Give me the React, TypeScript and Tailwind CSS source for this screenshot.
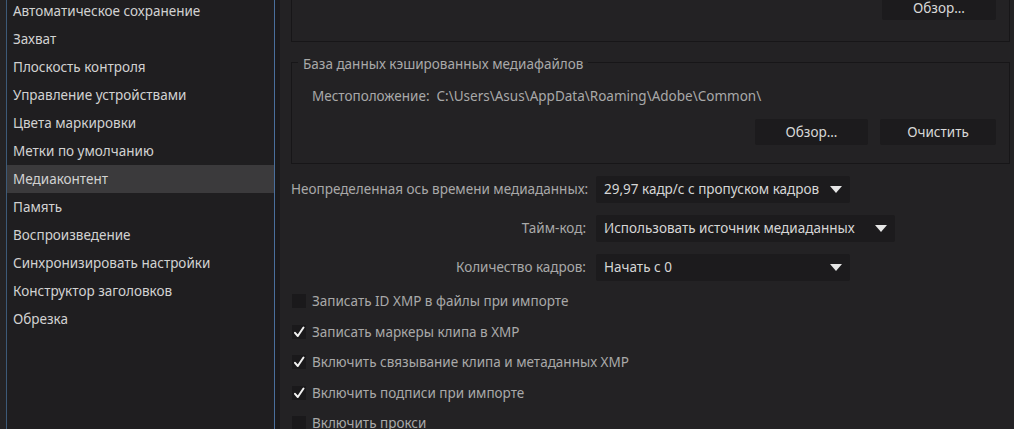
import React from 'react';

const sections = [
  'Автоматическое сохранение',
  'Захват',
  'Плоскость контроля',
  'Управление устройствами',
  'Цвета маркировки',
  'Метки по умолчанию',
  'Медиаконтент',
  'Память',
  'Воспроизведение',
  'Синхронизировать настройки',
  'Конструктор заголовков',
  'Обрезка',
];

const checks = [
  { label: 'Записать ID XMP в файлы при импорте', on: false },
  { label: 'Записать маркеры клипа в XMP', on: true },
  { label: 'Включить связывание клипа и метаданных XMP', on: true },
  { label: 'Включить подписи при импорте', on: true },
  { label: 'Включить прокси', on: false },
];

function Arrow() {
  return (
    <svg width="12" height="7" viewBox="0 0 12 7" className="shrink-0">
      <path d="M0 0 H12 L6 7 Z" fill="#e6e6e6" />
    </svg>
  );
}

function Dropdown({ value, width }: { value: string; width: string }) {
  return (
    <div className={`flex h-[27px] items-center gap-[6px] rounded-[2px] bg-[#1c1b1d] pl-[8px] pr-[8px] text-[#d6d6d6] ${width}`}>
      <span className="flex-1 whitespace-nowrap">{value}</span>
      <Arrow />
    </div>
  );
}

function Button({ children, className = '' }: { children: React.ReactNode; className?: string }) {
  return (
    <div className={`flex items-center justify-center rounded-[2px] bg-[#1c1b1d] text-[#d8d8d8] ${className}`}>
      {children}
    </div>
  );
}

export default function App() {
  return (
    <div
      className="flex h-[429px] w-[1014px] overflow-hidden bg-[#232224] text-[13.5px]"
      style={{ fontFamily: '"Noto Sans", "DejaVu Sans", sans-serif' }}
    >
      {/* список разделов */}
      <div className="flex w-[280px] shrink-0 bg-[#1f1e20]">
        <div className="w-[6px] bg-[#242325]" />
        <div className="w-[1px] bg-[#3d5a78]" />
        <div className="-mt-[3px] flex flex-1 flex-col">
          {sections.map((s) => (
            <div
              key={s}
              className={`flex h-[28px] shrink-0 items-center pl-[6px] text-[#d2d2d2] ${s === 'Медиаконтент' ? 'bg-[#3b3a3c]' : ''}`}
            >
              {s}
            </div>
          ))}
        </div>
        <div className="w-[1px] bg-[#4a6f9c]" />
        <div className="w-[5px] bg-[#1b1a1c]" />
      </div>

      {/* настройки */}
      <div className="flex min-w-0 flex-1 flex-col pl-[11px] pr-[4px]">
        <div className="flex h-[42px] shrink-0 justify-end border-b border-l border-r border-[#171618] pr-[13px]">
          <Button className="-mt-[4px] h-[24px] w-[114px]">Обзор...</Button>
        </div>

        <div className="relative mt-[20px] h-[102px] shrink-0 border border-[#171618]">
          <div className="absolute -top-[8px] left-[6px] bg-[#232224] px-[5px] leading-[18px] text-[#a9a9a9]">
            База данных кэшированных медиафайлов
          </div>
          <div className="pl-[20px] pt-[23px] text-[#a9a9a9]">
            Местоположение:&nbsp; C:\Users\Asus\AppData\Roaming\Adobe\Common\
          </div>
          <div className="mt-[13px] flex justify-end gap-[12px] pr-[13px]">
            <Button className="h-[26px] w-[113px]">Обзор...</Button>
            <Button className="h-[26px] w-[116px]">Очистить</Button>
          </div>
        </div>

        <div className="mt-[12px] grid shrink-0 grid-cols-[295px_auto] items-center gap-x-[10px] gap-y-[12px] text-[#a9a9a9]">
          <div className="whitespace-nowrap text-right">Неопределенная ось времени медиаданных:</div>
          <div>
            <Dropdown value="29,97 кадр/с с пропуском кадров" width="w-[254px]" />
          </div>
          <div className="text-right">Тайм-код:</div>
          <div>
            <Dropdown value="Использовать источник медиаданных" width="w-[299px]" />
          </div>
          <div className="text-right">Количество кадров:</div>
          <div>
            <Dropdown value="Начать с 0" width="w-[254px]" />
          </div>
        </div>

        <div className="mt-[5px] flex shrink-0 flex-col">
          {checks.map((c) => (
            <div key={c.label} className="flex h-[30.5px] shrink-0 items-center gap-[6px] text-[#a9a9a9]">
              <div className="ml-[1px] flex h-[14px] w-[14px] items-center justify-center bg-[#1a191b]">
                {c.on && (
                  <svg width="12" height="12" viewBox="0 0 12 12">
                    <path d="M2 6.8 L4.8 10 L10.5 1.5" fill="none" stroke="#f2f2f2" strokeWidth="2" strokeLinecap="round" strokeLinejoin="round" />
                  </svg>
                )}
              </div>
              <span>{c.label}</span>
            </div>
          ))}
        </div>
      </div>
    </div>
  );
}
